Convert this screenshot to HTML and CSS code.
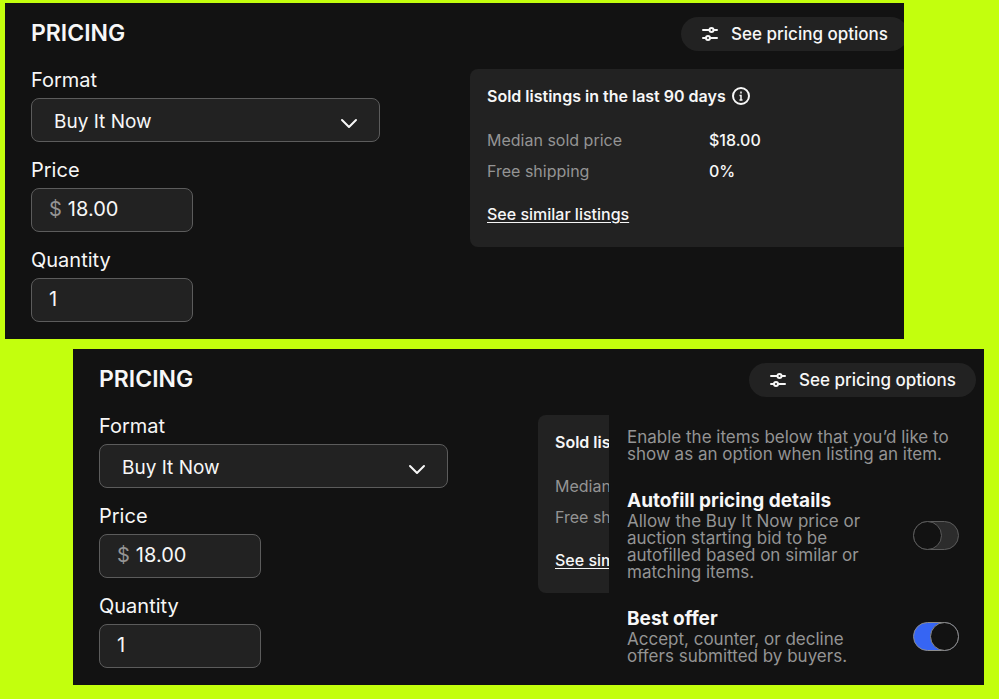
FILE: index.html
```
<!DOCTYPE html>
<html lang="en">

<head>
    <meta charset="UTF-8">
    <meta name="viewport" content="width=device-width, initial-scale=1.0">
    <title>Pricing</title>
    <link rel="stylesheet" href="styles.css">
</head>

<body>
    <main>
        <section class="panel panel-first">
            <div class="panel-header">
                <h2>PRICING</h2>
                <button class="options-btn" type="button">
                    <svg width="18" height="18" viewBox="0 0 18 18" fill="none" stroke="currentColor" stroke-width="2" stroke-linecap="round">
                        <path d="M2 5h6M13 5h3M2 13h3M10 13h6" />
                        <circle cx="10.5" cy="5" r="2" />
                        <circle cx="7" cy="13" r="2" />
                    </svg>
                    See pricing options
                </button>
            </div>
            <div class="panel-body">
                <form class="fields">
                    <div class="field">
                        <label for="format1">Format</label>
                        <div class="select-box">
                            <select id="format1">
                                <option>Buy It Now</option>
                                <option>Auction</option>
                            </select>
                            <svg class="chevron" width="18" height="12" viewBox="0 0 18 12" fill="none" stroke="currentColor" stroke-width="2" stroke-linecap="round" stroke-linejoin="round">
                                <path d="M2 2l7 7 7-7" />
                            </svg>
                        </div>
                    </div>
                    <div class="field">
                        <label for="price1">Price</label>
                        <div class="input-box">
                            <span class="currency">$</span>
                            <input id="price1" type="text" value="18.00">
                        </div>
                    </div>
                    <div class="field">
                        <label for="quantity1">Quantity</label>
                        <div class="input-box">
                            <input id="quantity1" type="text" value="1">
                        </div>
                    </div>
                </form>
                <div class="sold-card">
                    <h3>Sold listings in the last 90 days
                        <svg width="18" height="18" viewBox="0 0 18 18" fill="none" stroke="currentColor" stroke-width="2">
                            <circle cx="9" cy="9" r="8" />
                            <path d="M7.5 8.5H9V13M7.5 13h3M9 4.5v2" stroke-width="1.5" />
                        </svg>
                    </h3>
                    <table>
                        <tr>
                            <th scope="row">Median sold price</th>
                            <td>$18.00</td>
                        </tr>
                        <tr>
                            <th scope="row">Free shipping</th>
                            <td>0%</td>
                        </tr>
                    </table>
                    <a href="#">See similar listings</a>
                </div>
            </div>
        </section>

        <section class="panel panel-second">
            <div class="panel-header">
                <h2>PRICING</h2>
                <button class="options-btn" type="button">
                    <svg width="18" height="18" viewBox="0 0 18 18" fill="none" stroke="currentColor" stroke-width="2" stroke-linecap="round">
                        <path d="M2 5h6M13 5h3M2 13h3M10 13h6" />
                        <circle cx="10.5" cy="5" r="2" />
                        <circle cx="7" cy="13" r="2" />
                    </svg>
                    See pricing options
                </button>
            </div>
            <div class="panel-body">
                <form class="fields">
                    <div class="field">
                        <label for="format2">Format</label>
                        <div class="select-box">
                            <select id="format2">
                                <option>Buy It Now</option>
                                <option>Auction</option>
                            </select>
                            <svg class="chevron" width="18" height="12" viewBox="0 0 18 12" fill="none" stroke="currentColor" stroke-width="2" stroke-linecap="round" stroke-linejoin="round">
                                <path d="M2 2l7 7 7-7" />
                            </svg>
                        </div>
                    </div>
                    <div class="field">
                        <label for="price2">Price</label>
                        <div class="input-box">
                            <span class="currency">$</span>
                            <input id="price2" type="text" value="18.00">
                        </div>
                    </div>
                    <div class="field">
                        <label for="quantity2">Quantity</label>
                        <div class="input-box">
                            <input id="quantity2" type="text" value="1">
                        </div>
                    </div>
                </form>
                <div class="sold-card">
                    <h3>Sold listings</h3>
                    <table>
                        <tr>
                            <th scope="row">Median sold price</th>
                        </tr>
                        <tr>
                            <th scope="row">Free shipping</th>
                        </tr>
                    </table>
                    <a href="#">See similar listings</a>
                </div>
                <div class="drawer">
                    <p>Enable the items below that you’d like to show as an option when listing an item.</p>
                    <div class="option">
                        <div class="option-text">
                            <h4><label for="autofill">Autofill pricing details</label></h4>
                            <p>Allow the Buy It Now price or auction starting bid to be autofilled based on similar or matching items.</p>
                        </div>
                        <input class="toggle" id="autofill" type="checkbox">
                    </div>
                    <div class="option">
                        <div class="option-text">
                            <h4><label for="offer">Best offer</label></h4>
                            <p>Accept, counter, or decline offers submitted by buyers.</p>
                        </div>
                        <input class="toggle" id="offer" type="checkbox" checked>
                    </div>
                </div>
            </div>
        </section>
    </main>
</body>

</html>
```
FILE: styles.css
```
*,
*::before {
    margin: 0;
    padding: 0;
    box-sizing: border-box;
}

body {
    background-color: #c3ff0d;
    font-family: Inter, "Liberation Sans", sans-serif;
    color: #f7f7f7;
}

main {
    display: flex;
    flex-direction: column;
    gap: 10px;
    padding: 3px 15px 14px 5px;
}

.panel {
    overflow: hidden;
    background-color: #121212;
    padding: 14px 8px 17px 26px;
}

.panel-first {
    margin-right: 80px;
    padding-right: 0;
}

.panel-second {
    margin-left: 68px;
}

.panel-header {
    display: flex;
    align-items: center;
    justify-content: space-between;
    margin-bottom: 17px;
}

/* the button runs past the edge here */
.panel-first .panel-header {
    margin-right: -4px;
}

h2 {
    font-size: 23px;
    line-height: 32px;
    padding-bottom: 2px;
    font-weight: 600;
}

.options-btn {
    display: flex;
    align-items: center;
    gap: 12px;
    height: 34px;
    padding: 0 20px;
    border: none;
    border-radius: 17px;
    background-color: #222;
    color: inherit;
    font-family: inherit;
    font-size: 17px;
    font-weight: 500;
    white-space: nowrap;
    cursor: pointer;
}

.panel-body {
    display: flex;
    align-items: flex-start;
}

.fields {
    display: flex;
    flex-direction: column;
    gap: 16px;
    width: 349px;
    margin-right: 90px;
    flex-shrink: 0;
}

.field {
    display: flex;
    flex-direction: column;
    gap: 6px;
    font-size: 20px;
    line-height: 24px;
}

.select-box {
    position: relative;
}

select {
    appearance: none;
    width: 100%;
    height: 44px;
    padding: 3px 40px 0 22px;
    border: 1px solid #5c5c5c;
    border-radius: 8px;
    background-color: #222;
    color: inherit;
    font-family: inherit;
    font-size: 19px;
}

.chevron {
    position: absolute;
    right: 22px;
    top: 20px;
    pointer-events: none;
}

.input-box {
    display: flex;
    align-items: center;
    gap: 6px;
    width: 162px;
    height: 44px;
    padding: 0 17px 2px;
    border: 1px solid #5c5c5c;
    border-radius: 8px;
    background-color: #222;
}

.input-box input {
    width: 100%;
    min-width: 0;
    border: none;
    outline: none;
    background: none;
    color: inherit;
    font: inherit;
}

.currency {
    color: #949494;
}

/* in the second panel the open drawer leaves only a strip of the card */
.sold-card {
    flex: 1;
    min-width: 0;
    overflow: hidden;
    margin-top: 1px;
    padding: 15px 0 21px 17px;
    border-radius: 8px 0 0 8px;
    background-color: #222;
    font-size: 16px;
    line-height: 24px;
    white-space: nowrap;
}

.sold-card h3 {
    display: flex;
    align-items: center;
    gap: 6px;
    margin-bottom: 16px;
    font-size: 16px;
    font-weight: 600;
}

table {
    border-collapse: collapse;
    margin-bottom: 16px;
}

th {
    width: 222px;
    height: 31px;
    text-align: left;
    font-weight: 400;
    color: #949494;
}

td {
    font-weight: 500;
}

a {
    color: inherit;
    font-weight: 500;
    text-underline-offset: 2px;
}

.drawer {
    flex-shrink: 0;
    width: 375px;
    margin-right: -8px;
    padding: 15px 25px 0 18px;
    font-size: 17px;
    line-height: 17px;
    color: #949494;
}

.option {
    display: flex;
    align-items: center;
    justify-content: space-between;
    margin-top: 26px;
}

.option-text {
    width: 244px;
}

h4 {
    font-size: 19px;
    line-height: 24px;
    font-weight: 700;
    color: #f7f7f7;
}

.toggle {
    appearance: none;
    display: flex;
    width: 46px;
    height: 29px;
    border: 1px solid #5c5c5c;
    border-radius: 15px;
    background-color: #2c2c2c;
    cursor: pointer;
}

/* knob */
.toggle::before {
    content: "";
    width: 29px;
    height: 29px;
    margin: -1px;
    border: 1px solid #5c5c5c;
    border-radius: 50%;
    background-color: #121212;
}

.toggle:checked {
    justify-content: flex-end;
    border-color: #8c8c8c;
    background-color: #3665f3;
}

.toggle:checked::before {
    border-color: #8c8c8c;
}
```
